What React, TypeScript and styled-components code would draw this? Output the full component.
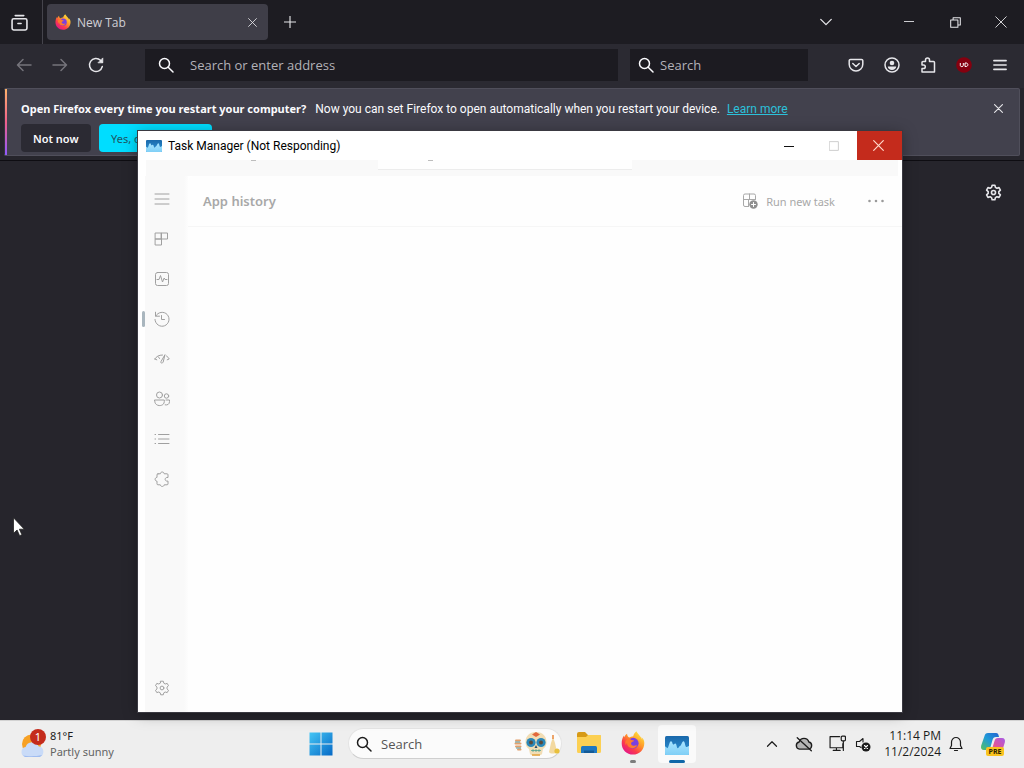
import React from "react";
import styled, { createGlobalStyle, css } from "styled-components";

const GlobalStyle = createGlobalStyle`
  *, *::before, *::after { box-sizing: border-box; }
  body {
    margin: 0;
    background: #26252d;
    font-family: "Open Sans", "Noto Sans", sans-serif;
    font-size: 12px;
  }
  button, input { font: inherit; color: inherit; }
  button { border: 0; padding: 0; background: none; cursor: default; }
  svg { display: block; flex: none; }
`;

const compactText = css`
  font-family: "Noto Sans", "Open Sans", sans-serif;
  font-size: 11px;
`;

const Desktop = styled.div`
  position: relative;
  display: flex;
  flex-direction: column;
  min-height: 100vh;
  overflow: hidden;
`;

/* ---------- Browser ---------- */

const Browser = styled.main`
  flex: 1;
  display: flex;
  flex-direction: column;
  background: #26252c;
  color: #fbfbfe;
`;

const TabStrip = styled.header`
  display: flex;
  align-items: center;
  height: 44px;
  background: #1d1c22;
`;

const IconButton = styled.button<{ $w?: number; $dim?: boolean }>`
  display: flex;
  align-items: center;
  justify-content: center;
  flex: none;
  width: ${(p) => p.$w ?? 36}px;
  height: 32px;
  color: ${(p) => (p.$dim ? "#75747b" : "#e6e6ea")};
`;

const ViewCell = styled.div`
  display: flex;
  align-items: center;
  height: 44px;
  padding: 0 3px 0 0;
  margin-right: 4px;
  border-right: 1px solid #45444c;
`;

const Tab = styled.div`
  display: flex;
  align-items: center;
  gap: 6px;
  width: 221px;
  height: 36px;
  padding: 0 4px 0 8px;
  border-radius: 4px;
  background: #3f3e48;
  color: #d0cfd6;
  margin-right: 6px;
`;

const TabTitle = styled.span`
  flex: 1;
`;

const Spacer = styled.div`
  flex: 1;
`;

const WindowButtons = styled.div`
  display: flex;
  margin-left: 44px;
`;

const NavBar = styled.nav`
  display: flex;
  align-items: center;
  height: 44px;
  padding: 0 6px 2px;
  background: #2b2a32;
`;

const Field = styled.label<{ $compact?: boolean }>`
  display: flex;
  align-items: center;
  gap: ${(p) => (p.$compact ? 6 : 16)}px;
  height: 32px;
  padding: 0 8px 0 ${(p) => (p.$compact ? 8 : 13)}px;
  background: #1c1b21;
  flex: ${(p) => (p.$compact ? "0 1 178px" : "1")};
  margin: ${(p) => (p.$compact ? "0 30px 0 12px" : "0 0 0 31px")};
  min-width: 0;
`;

const FieldInput = styled.input`
  flex: 1;
  min-width: 0;
  padding: 0;
  border: 0;
  outline: 0;
  background: none;
  font-size: 13px;
  &::placeholder { color: #b3b2b8; opacity: 1; }
`;

const Notice = styled.section`
  display: flex;
  justify-content: space-between;
  align-items: flex-start;
  margin: 0 4px 4px;
  height: 68px;
  border: 1px solid #504f5b;
  border-left: 0;
  border-radius: 2px;
  background: linear-gradient(90deg, #35343e 1px, transparent 1px),
    linear-gradient(#ffb36b, #f0608a 50%, #9059ff) 0 0 / 3px 100% no-repeat,
    #42414d;
`;

const NoticeBody = styled.div`
  padding: 12px 0 0 17px;
`;

const NoticeText = styled.p`
  margin: 0 0 7px;
  font-family: Roboto, "Noto Sans", sans-serif;
  font-size: 12px;
  line-height: 16px;
  white-space: nowrap;
`;

const NoticeLead = styled.strong`
  ${compactText}
  margin-right: 6px;
`;

const NoticeLink = styled.a`
  margin-left: 4px;
  color: #2cc0da;
  text-decoration: underline;
`;

const NoticeButtons = styled.div`
  display: flex;
  gap: 8px;
`;

const NoticeButton = styled.button<{ $primary?: boolean }>`
  ${compactText}
  height: 28px;
  width: ${(p) => (p.$primary ? 113 : 70)}px;
  padding-left: 12px;
  border-radius: 4px;
  text-align: left;
  white-space: nowrap;
  background: ${(p) => (p.$primary ? "#00ddff" : "#2b2a33")};
  color: ${(p) => (p.$primary ? "#1f5563" : "#fbfbfe")};
  font-weight: ${(p) => (p.$primary ? 400 : 600)};
`;

const NoticeClose = styled.div`
  padding: 3px 3px 0 0;
`;

const Content = styled.section`
  flex: 1;
  display: flex;
  justify-content: flex-end;
  align-items: flex-start;
  padding: 15px 13px;
  border-top: 1px solid #0e0d12;
`;

/* ---------- Task Manager ---------- */

const TaskWindow = styled.section`
  position: absolute;
  inset: 131px 122px 56px 138px;
  display: flex;
  flex-direction: column;
  background: #fff;
  color: #000;
  box-shadow: 0 0 0 1px #3a3941, 0 2px 14px rgba(0, 0, 0, 0.35);
`;

const TitleBar = styled.header`
  display: flex;
  align-items: center;
  height: 29px;
  padding-left: 8px;
  flex: none;
`;

const WindowTitle = styled.h1`
  flex: 1;
  margin: 0 0 0 6px;
  font-family: Roboto, "Noto Sans", sans-serif;
  font-size: 12px;
  font-weight: 400;
`;

const CaptionButton = styled.button<{ $kind: "plain" | "off" | "close" }>`
  display: flex;
  align-items: center;
  justify-content: center;
  width: 45px;
  height: 29px;
  padding-right: 2px;
  color: ${(p) => ({ plain: "#111", off: "#cfcfcf", close: "#ffd9cc" })[p.$kind]};
  background: ${(p) => (p.$kind === "close" ? "#c42b1c" : "none")};
`;

const Strip = styled.div`
  display: grid;
  grid-template-columns: 232px 254px 1fr;
  height: 16px;
  margin: 0 4px 0 8px;
  flex: none;
  background: #f9f9f9;
`;

const StripBox = styled.div`
  height: 10px;
  background: #fefefe;
  border-bottom: 1px solid #ececec;
  padding-left: 50px;
`;

const StripLead = styled.div`
  padding-left: 105px;
`;

const Mark = styled.div`
  width: 5px;
  height: 1px;
  background: #bdbdbd;
`;

const WindowBody = styled.div`
  flex: 1;
  display: flex;
  min-height: 0;
`;

const Rail = styled.nav`
  display: flex;
  flex-direction: column;
  width: 50px;
  padding: 3px 0 4px 4px;
  background: linear-gradient(90deg, #fff 7px, #f9f9f9 7px, #f9f9f9 46px, #fdfdfd 50px);
`;

const RailButton = styled.button<{ $active?: boolean; $last?: boolean }>`
  display: flex;
  align-items: center;
  width: 40px;
  height: 40px;
  color: #a0a0a0;
  gap: 9px;
  ${(p) => p.$last && css`margin-top: auto;`}
  &::before {
    content: "";
    width: 3px;
    height: 16px;
    border-radius: 2px;
    background: ${(p) => (p.$active ? "#a9b6be" : "transparent")};
  }
`;

const Pane = styled.div`
  flex: 1;
  background: #fefefe;
  border-radius: 6px 0 0 0;
`;

const PaneHeader = styled.div`
  display: flex;
  align-items: center;
  height: 51px;
  padding: 0 8px 0 15px;
  color: #a8a8a8;
  border-bottom: 1px solid #f6f6f6;
`;

const PaneTitle = styled.h2`
  flex: 1;
  margin: 0;
  font-family: "Noto Sans", "Open Sans", sans-serif;
  font-size: 13px;
  font-weight: 600;
`;

const PaneAction = styled.button`
  ${compactText}
  display: flex;
  align-items: center;
  gap: 8px;
  height: 32px;
  margin-right: 23px;
`;

/* ---------- Taskbar ---------- */

const Taskbar = styled.footer`
  display: grid;
  grid-template-columns: 1fr auto 1fr;
  align-items: center;
  height: 48px;
  padding: 0 20px 2px;
  background: #eeeeee;
  border-top: 1px solid #d2d2d2;
  color: #1c1c1c;
`;

const Weather = styled.button`
  ${compactText}
  display: flex;
  align-items: center;
  gap: 4px;
  text-align: left;
  line-height: 16px;
`;

const WeatherNote = styled.div`
  color: #636363;
`;

const CenterGroup = styled.div`
  display: flex;
  align-items: center;
  margin: 0 24px 0 0;
`;

const StartButton = styled.button`
  display: flex;
  align-items: center;
  justify-content: center;
  width: 33px;
  height: 38px;
`;

const SearchPill = styled.label`
  display: flex;
  align-items: center;
  gap: 9px;
  width: 214px;
  height: 31px;
  margin: 0 8px 0 11px;
  padding: 0 1px 0 7px;
  border-radius: 16px;
  background: #fbfbfb;
  border: 1px solid #e4e4e4;
  border-bottom-color: #cfcfcf;
`;

const PillInput = styled(FieldInput)`
  &::placeholder { color: #555; }
`;

const AppButton = styled.button<{ $state?: "open" | "active" }>`
  display: flex;
  flex-direction: column;
  align-items: center;
  justify-content: flex-end;
  gap: 5px;
  width: 38px;
  height: 38px;
  margin-right: 6px;
  border-radius: 4px;
  background: ${(p) => (p.$state === "active" ? "#fafafa" : "none")};
  &::after {
    content: "";
    width: ${(p) => (p.$state === "active" ? 16 : 6)}px;
    height: 3px;
    border-radius: 2px;
    background: ${(p) =>
      p.$state === "active" ? "#0f67a8" : p.$state === "open" ? "#7c7c7c" : "transparent"};
  }
  &:last-child { margin-right: 0; }
`;

const Tray = styled.div`
  display: flex;
  align-items: center;
  justify-content: flex-end;
  gap: 8px;
`;

const TrayButton = styled.button<{ $w?: number }>`
  display: flex;
  align-items: center;
  justify-content: space-around;
  flex: none;
  width: ${(p) => p.$w ?? 24}px;
  height: 38px;
`;

const Clock = styled.button`
  display: flex;
  align-items: center;
  gap: 3px;
  line-height: 16px;
  text-align: right;
  margin-right: 4px;
  white-space: nowrap;
`;

const BellBox = styled.span`
  display: flex;
  justify-content: center;
  width: 24px;
`;

const Cursor = styled.div`
  position: absolute;
  left: 13px;
  top: 517px;
`;

/* ---------- Drawings ---------- */

type IconProps = { size?: number; sw?: number; children: React.ReactNode };

const Icon = ({ size = 16, sw = 1.5, children }: IconProps) => (
  <svg
    width={size}
    height={size}
    viewBox="0 0 16 16"
    fill="none"
    stroke="currentColor"
    strokeWidth={sw}
    strokeLinecap="round"
    strokeLinejoin="round"
    aria-hidden="true"
  >
    {children}
  </svg>
);

const SearchIcon = ({ size = 16 }: { size?: number }) => (
  <Icon size={size}>
    <circle cx="6.5" cy="6.5" r="5" />
    <path d="M10.2 10.2 15 15" />
  </Icon>
);

const GEAR =
  "M6.7 1.2h2.6l.5 2 1.4.8 2-.6 1.300 2.300-1.500 1.400v1.800l1.500 1.400-1.300 2.300-2-.6-1.400.8-.5 2H6.700l-.5-2-1.400-.8-2 .6-1.300-2.300L3 8.900V7.100L1.500 5.700l1.300-2.300 2 .6 1.400-.8z";

const GearIcon = ({ sw, size }: { sw?: number; size?: number }) => (
  <Icon sw={sw} size={size}>
    <path d={GEAR} />
    <circle cx="8" cy="8" r="1.900" />
  </Icon>
);

const FirefoxLogo = ({ size, id }: { size: number; id: string }) => (
  <svg width={size} height={size} viewBox="0 0 24 24" aria-hidden="true">
    <defs>
      <linearGradient id={`${id}a`} x1="0.85" y1="0.1" x2="0.2" y2="0.95">
        <stop offset="0" stopColor="#ffe23c" />
        <stop offset="0.4" stopColor="#ff9428" />
        <stop offset="0.7" stopColor="#fb3b4b" />
        <stop offset="1" stopColor="#e3158c" />
      </linearGradient>
    </defs>
    <path
      fill={`url(#${id}a)`}
      d="M22.8 9.2c-.5-1.3-1.600-2.600-2.400-3 .5 1 .8 2 .9 2.700C20 5.700 17.900 4.400 16.100 1.600c-.3-.5-.5-1-.5-1.400-2.300 1.300-3.100 3.700-3.300 5C10.500 5.200 9 6 8.500 6.600 6.800 6.300 6 4 6.100 2.700 4.500 3.700 3.600 5 3.100 6.300 2.900 5.700 2.900 5 3 4.500 1.500 6.500.700 9 .7 12.400.7 18.700 5.800 23.600 12 23.600s11.300-4.900 11.300-11.400c0-1.100-.1-2-.5-3z"
    />
    <circle cx="12.200" cy="12.200" r="5.400" fill="#7a3fe0" />
    <path
      fill="#ff7a2c"
      d="M4.400 10.500c1-2.300 3-3.600 5-3.600-.4.700-.2 1.500.7 2l3 .7c-.2 1-1.800 1.300-2.700 2-.8.700-.3 3 2 3.200 1.500.2 2.500-.6 3.600-.4-1.600 3.400-6.800 3.700-9 .6-.9-1.300-1-2.500-.9-3.200-.6.500-1 1.700-1 2.700-.8-1.200-1.100-2.600-.7-4z"
    />
  </svg>
);

const TaskManagerLogo = ({ w, h, id }: { w: number; h: number; id: string }) => (
  <svg width={w} height={h} viewBox="0 0 24 18" preserveAspectRatio="none" aria-hidden="true">
    <defs>
      <linearGradient id={id} x1="0" y1="0" x2="0" y2="1">
        <stop offset="0" stopColor="#1a69ab" />
        <stop offset="1" stopColor="#2f95d8" />
      </linearGradient>
      <linearGradient id={`${id}w`} x1="0" y1="0" x2="0" y2="1">
        <stop offset="0" stopColor="#a9e4ff" />
        <stop offset="1" stopColor="#7fcff6" />
      </linearGradient>
    </defs>
    <rect width="24" height="18" rx="1.500" fill={`url(#${id})`} />
    <path
      fill={`url(#${id}w)`}
      d="M0 10c1.200 0 1.500 1.500 2.500 1.500S4.300 5 6 5c1.500 0 1.300 3 2.300 3s1-1 2-1c1.500 0 1.300 4.500 2.500 4.500s1.300-2 2.300-2S17 5 18.500 5c1.700 0 1.500 5.500 3 5.500 1 0 1.300-1 2.500-1v7a1.500 1.500 0 0 1-1.500 1.500h-21A1.500 1.500 0 0 1 0 16.500z"
    />
  </svg>
);

const WeatherArt = () => (
  <svg width="26" height="30" viewBox="0 0 26 30" aria-hidden="true">
    <circle cx="11.500" cy="15" r="9.500" fill="#f7a125" />
    <path d="M6 28a5 5 0 0 1-.4-9.900 7 7 0 0 1 13-.8A5.500 5.500 0 0 1 19.500 28z" fill="#c9dbf8" />
    <path d="M3 26.500c5 1 13 1 19-.5-1 1.500-2 2-3 2H6c-1.300 0-2.300-.6-3-1.500z" fill="#9fbcf0" />
    <circle cx="18" cy="8" r="8" fill="#c42b1c" />
    <text x="18" y="12" fill="#fff" fontSize="11" textAnchor="middle">1</text>
  </svg>
);

const WindowsLogo = () => (
  <svg width="24" height="24" viewBox="0 0 24 24" aria-hidden="true">
    <defs>
      <linearGradient id="win" x1="0" y1="0" x2="1" y2="1">
        <stop offset="0" stopColor="#45c6f5" />
        <stop offset="1" stopColor="#0669c6" />
      </linearGradient>
    </defs>
    <path fill="url(#win)" d="M.5.5h11v11H.5zM12.500.5h11v11h-11zM.5 12.500h11v11H.5zM12.500 12.500h11v11h-11z" />
  </svg>
);

const SkullArt = () => (
  <svg width="48" height="26" viewBox="0 0 48 26" aria-hidden="true">
    <path d="M4 9.500h4M3.500 12.500h5M4 15.500h4.500M6 18.500h2.500" stroke="#e2a06c" strokeWidth="2" strokeLinecap="round" />
    <path d="M3 11h5M4 17h5" stroke="#5a9aa0" strokeWidth="1" />
    <path d="M24 1c7 0 10.500 4.500 10.500 10 0 4-1.500 5.500-3.500 7l-1 5c-1 2-11 2-12 0l-1-5c-2-1.500-3.500-3-3.500-7C13.500 5.500 17 1 24 1z" fill="#f1ddb5" />
    <path d="M20 3.500 24 1l4 2.500-4 2.500z" fill="#e2683c" />
    <circle cx="19" cy="11.500" r="4.600" fill="#2b87b8" />
    <circle cx="29" cy="11.500" r="4.600" fill="#2b87b8" />
    <circle cx="19" cy="11.500" r="2" fill="#5b4a3a" />
    <circle cx="29" cy="11.500" r="2" fill="#5b4a3a" />
    <path d="m24 14 1.500 3h-3z" fill="#31506b" />
    <path d="M19 19.500h10M21 18.200v2.800M24 18.200v2.800M27 18.200v2.800" stroke="#3f9b8b" strokeWidth="0.700" />
    <path d="M20 24h8" stroke="#e2a03c" strokeWidth="1.500" />
    <path d="M41 6l2 6 2 9c-2 2-7 2-8 0l2-9z" fill="#f3d9a0" />
    <circle cx="45" cy="20" r="2.600" fill="#e8c03c" />
    <path d="M41 4v4" stroke="#e8883c" strokeWidth="1.500" />
  </svg>
);

const FolderLogo = () => (
  <svg width="26" height="24" viewBox="0 0 26 24" aria-hidden="true">
    <path d="M1 3a2 2 0 0 1 2-2h6l3 3h11a2 2 0 0 1 2 2v4H1z" fill="#d79a17" />
    <path d="M1 6h9l2-2h12a1 1 0 0 1 1 1v15.500a1.500 1.500 0 0 1-1.500 1.500h-21A1.500 1.500 0 0 1 1 20.500z" fill="#fcd053" />
    <path d="M5 22v-5.500A1.500 1.500 0 0 1 6.500 15h13a1.500 1.500 0 0 1 1.500 1.500V22z" fill="#1f78c1" />
    <path d="M8 22v-2.500h10V22z" fill="#145a96" />
  </svg>
);

const CopilotLogo = () => (
  <svg width="26" height="26" viewBox="0 0 26 26" aria-hidden="true">
    <defs>
      <linearGradient id="cpa" x1="0" y1="1" x2="1" y2="0">
        <stop offset="0" stopColor="#57c25b" />
        <stop offset="0.500" stopColor="#1f9bd8" />
        <stop offset="1" stopColor="#2463cf" />
      </linearGradient>
      <linearGradient id="cpb" x1="0" y1="1" x2="1" y2="0">
        <stop offset="0" stopColor="#f78a52" />
        <stop offset="0.500" stopColor="#e0559a" />
        <stop offset="1" stopColor="#a55be8" />
      </linearGradient>
    </defs>
    <path d="M8 2h8c2 0 2.500 1.500 3 4h-3c-2 0-3 1-3.500 3l-2 7c-.5 2-1.500 3-3.500 3H4c-2.500 0-3.500-2-2.800-4.500L4.500 5C5 3 6 2 8 2z" fill="url(#cpa)" />
    <path d="M18 7h4c2.500 0 3.500 2 2.800 4.500l-2.500 8c-.6 2-1.800 3.500-3.800 3.500H10c-2 0-2.500-1.500-3-3.500h2c2 0 3-1 3.500-3l2-6.500c.5-2 1.500-3 3.500-3z" fill="url(#cpb)" />
    <rect x="6" y="16" width="18" height="9" rx="2" fill="#f9c31f" />
    <text x="15" y="23" fill="#2b2200" fontSize="7" fontWeight="700" textAnchor="middle">PRE</text>
  </svg>
);

const railIcons: { label: string; active?: boolean; art: React.ReactNode }[] = [
  { label: "Menu", art: <path d="M1 3h14M1 8h14M1 13h14" /> },
  { label: "Processes", art: <path d="M1.500 2h6v6h-6zM7.500 2h6v6h-6zM1.500 8h6v6h-6z" /> },
  {
    label: "Performance",
    art: (
      <>
        <rect x="1.500" y="1.500" width="13" height="13" rx="2" />
        <path d="M3 8.500h2l1.500-4 2 6.500 1.700-4 .8 1.500h2" />
      </>
    ),
  },
  {
    label: "App history",
    active: true,
    art: (
      <>
        <path d="M1.500 1.200v4h4M1.800 5A7 7 0 1 1 1 8.500" />
        <path d="M7.500 4.500v4h3" />
      </>
    ),
  },
  {
    label: "Startup apps",
    art: (
      <>
        <path d="M.8 8c1.600-2.500 4-4 7.700-4M12.500 5c1.200.7 2 1.700 2.700 3l-2 .8M.8 8l2 .8M4.500 6l1 1.500" />
        <path d="M10.800 4 7 10.500c-.6 1.500.9 2.400 1.900 1z" />
      </>
    ),
  },
  {
    label: "Users",
    art: (
      <>
        <circle cx="5.500" cy="4" r="3" />
        <circle cx="12.500" cy="5" r="2.200" />
        <path d="M.8 9h9.500v1.500c0 5.500-9.500 5.500-9.500 0zM12 9h3.500v1.500c0 2.800-2 3.800-4.300 3.400" />
      </>
    ),
  },
  { label: "Details", art: <path d="M4.500 3.500H15M4.500 8H15M4.500 12.500H15M1 3.500h.6M1 8h.6M1 12.500h.6" /> },
  {
    label: "Services",
    art: (
      <path d="M4 2.800h2.300c.2-2.400 3.700-2.400 3.900 0H13a1 1 0 0 1 1 1v2.700h-1.200c-2.200.3-2.200 3.300 0 3.600H14v2.700a1 1 0 0 1-1 1h-2.800c-.2 2.200-3.700 2.200-3.900 0H4a1 1 0 0 1-1-1v-2.600c-2.500-.2-2.500-3.600 0-3.800V3.800a1 1 0 0 1 1-1z" />
    ),
  },
];

/* ---------- Page ---------- */

export default function App() {
  return (
    <>
      <GlobalStyle />
      <Desktop>
        <Browser>
          <TabStrip>
            <ViewCell>
              <IconButton $w={39} aria-label="Firefox View">
                <Icon size={17}>
                  <path d="M4 1.500h8" />
                  <rect x="1" y="4.500" width="14" height="10.500" rx="1.500" />
                  <path d="M6.500 9h3" />
                </Icon>
              </IconButton>
            </ViewCell>
            <Tab>
              <FirefoxLogo size={16} id="fxtab" />
              <TabTitle>New Tab</TabTitle>
              <IconButton $w={24} aria-label="Close tab">
                <Icon size={9} sw={1.500}><path d="M1 1l14 14M15 1 1 15" /></Icon>
              </IconButton>
            </Tab>
            <IconButton $w={32} aria-label="New tab">
              <Icon size={12} sw={1.500}><path d="M8 0v16M0 8h16" /></Icon>
            </IconButton>
            <Spacer />
            <IconButton $w={32} aria-label="List all tabs">
              <Icon size={14}><path d="m2 5 6 6 6-6" /></Icon>
            </IconButton>
            <WindowButtons>
              <IconButton $w={46} aria-label="Minimize browser">
                <Icon size={10} sw={1.400}><path d="M0 7.200h16" /></Icon>
              </IconButton>
              <IconButton $w={46} aria-label="Restore browser">
                <Icon size={11} sw={1.500}>
                  <path d="M1 4.500h10.500V15H1zM4.500 4.500V1H15v10.500h-3.500" />
                </Icon>
              </IconButton>
              <IconButton $w={46} aria-label="Close browser">
                <Icon size={12} sw={1.200}><path d="M1 1l14 14M15 1 1 15" /></Icon>
              </IconButton>
            </WindowButtons>
          </TabStrip>

          <NavBar>
            <IconButton $dim aria-label="Back">
              <Icon><path d="M15 8H1.500M7 2.500 1.500 8 7 13.500" /></Icon>
            </IconButton>
            <IconButton $dim aria-label="Forward">
              <Icon><path d="M1 8h13.500M9 2.500l5.500 5.500L9 13.500" /></Icon>
            </IconButton>
            <IconButton aria-label="Reload">
              <Icon>
                <path d="M14.300 9.500A6.500 6.500 0 1 1 12.500 3.300l1.700 1.900" />
                <path d="M14.800 1.300v4.500h-4.500z" fill="currentColor" strokeWidth="0.800" />
              </Icon>
            </IconButton>
            <Field>
              <SearchIcon />
              <FieldInput placeholder="Search or enter address" aria-label="Address" />
            </Field>
            <Field $compact>
              <SearchIcon />
              <FieldInput placeholder="Search" aria-label="Web search" />
            </Field>
            <IconButton aria-label="Save to Pocket">
              <Icon>
                <path d="M2.500 2.500h11a1.300 1.300 0 0 1 1.300 1.300v3.400a6.800 6.800 0 0 1-13.600 0V3.800a1.300 1.300 0 0 1 1.300-1.300zM4.800 6.500 8 9.500l3.200-3" />
              </Icon>
            </IconButton>
            <IconButton aria-label="Account">
              <Icon>
                <circle cx="8" cy="8" r="7" />
                <circle cx="8" cy="6" r="2.300" fill="currentColor" stroke="none" />
                <path d="M3.800 9.500h8.400c0 4.500-8.400 4.500-8.400 0z" fill="currentColor" stroke="none" />
              </Icon>
            </IconButton>
            <IconButton aria-label="Extensions">
              <Icon>
                <path d="M5.500 4.500V3a2 2 0 0 1 4 0v1.500h4a1 1 0 0 1 1 1V15H2v-3.500h1.500a1.800 1.800 0 0 0 0-3.600H2V5.500a1 1 0 0 1 1-1z" />
              </Icon>
            </IconButton>
            <IconButton aria-label="uBlock Origin">
              <svg width="16" height="16" viewBox="0 0 16 16" aria-hidden="true">
                <circle cx="8" cy="8" r="7.800" fill="#85000f" />
                <path
                  d="M4.300 6v2.500c0 1.500 3 1.500 3 0V6M9 6v3.500h1c2.500 0 2.500-3.500 0-3.500z"
                  fill="none"
                  stroke="#fff"
                  strokeWidth="1"
                />
              </svg>
            </IconButton>
            <IconButton aria-label="Application menu">
              <Icon size={14} sw={1.800}><path d="M1 3h14M1 8h14M1 13h14" /></Icon>
            </IconButton>
          </NavBar>

          <Notice>
            <NoticeBody>
              <NoticeText>
                <NoticeLead>Open Firefox every time you restart your computer?</NoticeLead> Now you can set
                Firefox to open automatically when you restart your device.{" "}
                <NoticeLink href="#learn">Learn more</NoticeLink>
              </NoticeText>
              <NoticeButtons>
                <NoticeButton>Not now</NoticeButton>
                <NoticeButton $primary>Yes, open</NoticeButton>
              </NoticeButtons>
            </NoticeBody>
            <NoticeClose>
              <IconButton aria-label="Dismiss message">
                <Icon size={9} sw={2}><path d="M1 1l14 14M15 1 1 15" /></Icon>
              </IconButton>
            </NoticeClose>
          </Notice>

          <Content>
            <IconButton aria-label="Personalize new tab">
              <GearIcon size={17} />
            </IconButton>
          </Content>
        </Browser>

        <TaskWindow>
          <TitleBar>
            <TaskManagerLogo w={16} h={12} id="tmsmall" />
            <WindowTitle>Task Manager (Not Responding)</WindowTitle>
            <CaptionButton $kind="plain" aria-label="Minimize">
              <Icon size={10} sw={1.600}><path d="M0 8.800h16" /></Icon>
            </CaptionButton>
            <CaptionButton $kind="off" aria-label="Maximize" disabled>
              <Icon size={10} sw={1.600}><path d="M1 1h14v14H1z" /></Icon>
            </CaptionButton>
            <CaptionButton $kind="close" aria-label="Close">
              <Icon size={11} sw={1.700}><path d="M1 1l14 14M15 1 1 15" /></Icon>
            </CaptionButton>
          </TitleBar>
          <Strip>
            <StripLead><Mark /></StripLead>
            <StripBox><Mark /></StripBox>
          </Strip>
          <WindowBody>
            <Rail>
              {railIcons.map((item) => (
                <RailButton key={item.label} $active={item.active} aria-label={item.label}>
                  <Icon sw={1}>{item.art}</Icon>
                </RailButton>
              ))}
              <RailButton $last aria-label="Settings">
                <GearIcon sw={1} />
              </RailButton>
            </Rail>
            <Pane>
              <PaneHeader>
                <PaneTitle>App history</PaneTitle>
                <PaneAction>
                  <Icon size={16} sw={1}>
                    <path d="M6.500 13.500H3A1.500 1.500 0 0 1 1.500 12V2.500A1.500 1.500 0 0 1 3 1h9a1.500 1.500 0 0 1 1.500 1.500V6M1.500 6.500h12M7.500 1v5.500M6.500 6.500v7" />
                    <circle cx="11.500" cy="11.500" r="4.200" fill="#8f8f8f" stroke="none" />
                    <path d="M9.500 11.500h4M11.500 9.500v4" stroke="#fff" />
                  </Icon>
                  Run new task
                </PaneAction>
                <IconButton aria-label="More options" $dim>
                  <Icon><path d="M1.500 8h.01M8 8h.01M14.500 8h.01" stroke="#9a9a9a" strokeWidth="2.600" /></Icon>
                </IconButton>
              </PaneHeader>
            </Pane>
          </WindowBody>
        </TaskWindow>

        <Taskbar>
          <Weather>
            <WeatherArt />
            <div>
              <div>81°F</div>
              <WeatherNote>Partly sunny</WeatherNote>
            </div>
          </Weather>
          <CenterGroup>
            <StartButton aria-label="Start"><WindowsLogo /></StartButton>
            <SearchPill>
              <SearchIcon />
              <PillInput placeholder="Search" aria-label="Search Windows" />
              <SkullArt />
            </SearchPill>
            <AppButton aria-label="File Explorer"><FolderLogo /></AppButton>
            <AppButton $state="open" aria-label="Firefox"><FirefoxLogo size={24} id="fxbar" /></AppButton>
            <AppButton $state="active" aria-label="Task Manager">
              <TaskManagerLogo w={24} h={19} id="tmbar" />
            </AppButton>
          </CenterGroup>
          <Tray>
            <TrayButton aria-label="Hidden icons">
              <Icon size={12} sw={1.600}><path d="m2 11 6-6 6 6" /></Icon>
            </TrayButton>
            <TrayButton aria-label="OneDrive">
              <Icon size={18} sw={1.200}>
                <path d="M4 12.500a3.200 3.200 0 0 1-.3-6.300 4.500 4.500 0 0 1 8.600 0 3.200 3.200 0 0 1-.3 6.300z" fill="#b5b5b5" />
                <path d="M2 2.500 14.500 14" />
              </Icon>
            </TrayButton>
            <TrayButton $w={52} aria-label="Network and sound">
              <Icon size={17} sw={1.100}>
                <path d="M10 1.500H1v10.500h12V8M7 12v2.500M4 14.500h6.500M13.500 6v8.500" />
                <rect x="11.500" y="1" width="4" height="4.500" rx="1" />
              </Icon>
              <Icon size={16} sw={1.100}>
                <path d="M8 2.500 4.500 5.500H1.500v5h3l1.500 1M8 2.500V6" />
                <circle cx="11" cy="11" r="4.500" fill="currentColor" stroke="none" />
                <path d="m9.500 9.500 3 3M12.500 9.500l-3 3" stroke="#fff" />
              </Icon>
            </TrayButton>
            <Clock>
              <span>
                11:14 PM
                <br />
                11/2/2024
              </span>
              <BellBox>
                <Icon sw={1.200}>
                  <path d="M8 1.500a4.500 4.500 0 0 0-4.500 4.500v3.500L2 12.500h12l-1.500-3V6A4.500 4.500 0 0 0 8 1.500zM6.500 14.500h3" />
                </Icon>
              </BellBox>
            </Clock>
            <TrayButton aria-label="Copilot"><CopilotLogo /></TrayButton>
          </Tray>
        </Taskbar>

        <Cursor>
          <svg width="12" height="20" viewBox="0 0 12 20" aria-hidden="true">
            <path d="M.5.800v15.500l3.600-3.300 2.500 5.700 2.300-1-2.500-5.500h4.900z" fill="#fff" stroke="#222" strokeWidth="0.800" />
          </svg>
        </Cursor>
      </Desktop>
    </>
  );
}
